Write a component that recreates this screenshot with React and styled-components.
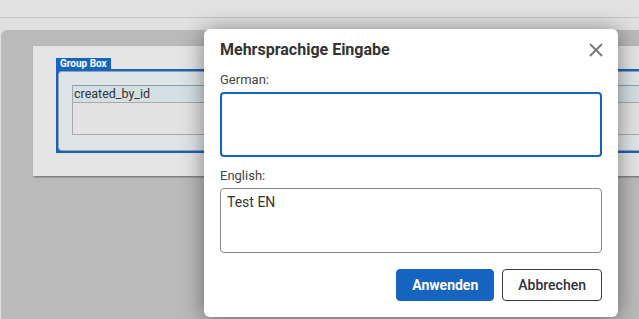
import React from 'react';
import styled, { createGlobalStyle } from 'styled-components';

const GlobalStyle = createGlobalStyle`
  html, body {
    margin: 0;
    padding: 0;
    height: 100%;
    overflow: hidden;
  }

  body {
    font-family: Roboto, 'Liberation Sans', Arial, sans-serif;
    background: #e0e0e0;
  }
`;

const Page = styled.div`
  position: relative;
  width: 639px;
  height: 319px;
  display: flex;
  flex-direction: column;
  overflow: hidden;
  background: #e0e0e0;
`;

const TopBar = styled.div`
  height: 17px;
  flex-shrink: 0;
  background: #e1e1e1;
  border-bottom: 1px solid #c6c6c6;
`;

const SubBar = styled.div`
  height: 12px;
  flex-shrink: 0;
  background: #e0e0e0;
`;

const Workspace = styled.div`
  flex: 1;
  margin-left: 1px;
  padding: 16px 0 0 32px;
  background: #bababa;
  border-top-left-radius: 6px;
  overflow: hidden;
`;

const Canvas = styled.div`
  width: 700px;
  height: 130px;
  box-sizing: border-box;
  padding: 12px 0 0 23px;
  background: #e4e4e4;
  box-shadow: 1px 1px 2px rgba(0, 0, 0, 0.45);
`;

const GroupTab = styled.div`
  width: fit-content;
  height: 11px;
  padding: 0 4px;
  background: #1565c0;
  color: #fff;
  font-size: 10px;
  font-weight: 700;
  line-height: 11px;
`;

const GroupFrame = styled.div`
  height: 84px;
  box-sizing: border-box;
  border: 2px solid #1565c0;
  border-right: none;
  background: #1565c0;
`;

const GroupInner = styled.div`
  height: 100%;
  box-sizing: border-box;
  padding: 13px 0 0 13px;
  border: 1px solid #98a2a8;
  border-right: none;
  border-radius: 4px 0 0 4px;
  background: #dfe4e7;
`;

const FieldHeader = styled.div`
  height: 18px;
  box-sizing: border-box;
  padding-left: 1px;
  border-top: 1px solid #86a0ad;
  border-left: 1px solid #9aaab2;
  border-bottom: 1px solid #a9a9a9;
  background: #d3dfe3;
  color: #333;
  font-size: 12.5px;
  line-height: 16px;
`;

const FieldBody = styled.div`
  height: 32px;
  box-sizing: border-box;
  border-left: 1px solid #a9a9a9;
  border-bottom: 1px solid #a9a9a9;
  background: #e2e2e2;
`;

const Modal = styled.div`
  position: absolute;
  left: 204px;
  top: 29px;
  width: 414px;
  height: 288px;
  box-sizing: border-box;
  padding: 11px 16px 16px;
  display: flex;
  flex-direction: column;
  background: #fff;
  border-radius: 6px;
  box-shadow: 0 2px 22px rgba(0, 0, 0, 0.45);
`;

const ModalHeader = styled.div`
  display: flex;
  align-items: center;
  justify-content: space-between;
  height: 20px;
  margin-bottom: 12px;
`;

const Title = styled.h2`
  margin: 0;
  font-size: 16px;
  font-weight: 700;
  line-height: 20px;
  color: #333;
`;

const CloseButton = styled.button`
  display: flex;
  padding: 0;
  margin-right: -1px;
  border: none;
  background: none;
  cursor: pointer;
`;

const Field = styled.label`
  display: flex;
  flex-direction: column;
  gap: 4px;
  margin-bottom: ${(p) => p.$gap}px;
`;

const Label = styled.span`
  font-size: 13px;
  line-height: 16px;
  color: #444;
`;

const TextArea = styled.textarea`
  height: 65px;
  box-sizing: border-box;
  padding: ${(p) => (p.$focused ? '2px 5px' : '3px 6px')};
  border: ${(p) => (p.$focused ? '2px solid #1565c0' : '1px solid #8a8a8a')};
  border-radius: 4px;
  outline: none;
  resize: none;
  font-family: Roboto, 'Liberation Sans', Arial, sans-serif;
  font-size: 14px;
  line-height: 20px;
  color: #333;
  background: #fff;
`;

const Actions = styled.div`
  display: flex;
  justify-content: flex-end;
  gap: 8px;
  margin-top: auto;
`;

const Button = styled.button`
  height: 32px;
  padding: 0 15px;
  border-radius: 4px;
  border: 1px solid ${(p) => (p.$primary ? '#1565c0' : '#3a3b48')};
  background: ${(p) => (p.$primary ? '#1565c0' : '#fff')};
  color: ${(p) => (p.$primary ? '#fff' : '#2f3040')};
  font-family: Roboto, 'Liberation Sans', Arial, sans-serif;
  font-size: 14px;
  font-weight: ${(p) => (p.$primary ? 700 : 500)};
  cursor: pointer;
`;

const App = () => {
  return (
    <>
      <GlobalStyle />
      <Page>
        <TopBar />
        <SubBar />
        <Workspace>
          <Canvas>
            <GroupTab>Group Box</GroupTab>
            <GroupFrame>
              <GroupInner>
                <FieldHeader>created_by_id</FieldHeader>
                <FieldBody />
              </GroupInner>
            </GroupFrame>
          </Canvas>
        </Workspace>

        <Modal>
          <ModalHeader>
            <Title>Mehrsprachige Eingabe</Title>
            <CloseButton aria-label='close'>
              <svg width='14' height='14' viewBox='0 0 14 14'>
                <path d='M1 1 L13 13 M13 1 L1 13' stroke='#777' strokeWidth='1.8' fill='none' />
              </svg>
            </CloseButton>
          </ModalHeader>

          <Field $gap={11}>
            <Label>German:</Label>
            <TextArea $focused defaultValue='' />
          </Field>

          <Field $gap={0}>
            <Label>English:</Label>
            <TextArea defaultValue='Test EN' />
          </Field>

          <Actions>
            <Button $primary>Anwenden</Button>
            <Button>Abbrechen</Button>
          </Actions>
        </Modal>
      </Page>
    </>
  );
};

export default App;
